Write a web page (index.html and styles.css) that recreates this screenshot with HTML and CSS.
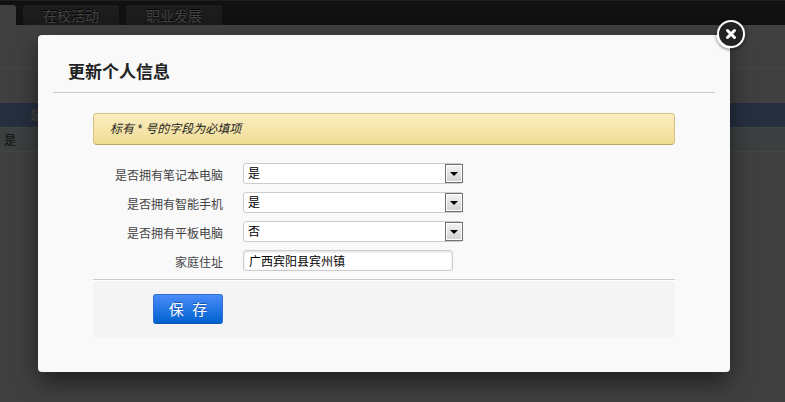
FILE: index.html
```
<!DOCTYPE html>
<html lang="zh-CN">
<head>
    <meta charset="utf-8">
    <title>更新个人信息</title>
    <link rel="stylesheet" href="styles.css">
</head>
<body>
    <div class="page">
        <nav class="tabs">
            <a href="#" class="tab current" aria-label="个人信息"></a>
            <a href="#activity" class="tab">在校活动</a>
            <a href="#career" class="tab">职业发展</a>
        </nav>
        <div class="toolbar"></div>
        <table class="list">
            <thead>
                <tr><th>是</th></tr>
            </thead>
            <tbody>
                <tr><td>是</td></tr>
            </tbody>
        </table>
    </div>

    <div class="modal" role="dialog" aria-labelledby="modal_title">
        <button type="button" class="close" aria-label="关闭">
            <svg width="30" height="30" viewBox="0 0 30 30">
                <circle cx="15" cy="15" r="13" fill="#222" stroke="#fff" stroke-width="2"/>
                <path d="M11.5 11.5l7 7M18.5 11.5l-7 7" stroke="#fff" stroke-width="3" stroke-linecap="round"/>
            </svg>
        </button>
        <h2 class="title" id="modal_title">更新个人信息</h2>
        <form class="form" action="#" method="post">
            <p class="notice">标有 * 号的字段为必填项</p>
            <div class="row">
                <label for="has_laptop">是否拥有笔记本电脑</label>
                <div class="select-wrapper">
                    <select id="has_laptop" name="has_laptop">
                        <option selected>是</option>
                        <option>否</option>
                    </select>
                    <span class="arrow"><svg width="8" height="4" viewBox="0 0 8 4"><path d="M0 0h8L4 4z"/></svg></span>
                </div>
            </div>
            <div class="row">
                <label for="has_phone">是否拥有智能手机</label>
                <div class="select-wrapper">
                    <select id="has_phone" name="has_phone">
                        <option selected>是</option>
                        <option>否</option>
                    </select>
                    <span class="arrow"><svg width="8" height="4" viewBox="0 0 8 4"><path d="M0 0h8L4 4z"/></svg></span>
                </div>
            </div>
            <div class="row">
                <label for="has_tablet">是否拥有平板电脑</label>
                <div class="select-wrapper">
                    <select id="has_tablet" name="has_tablet">
                        <option>是</option>
                        <option selected>否</option>
                    </select>
                    <span class="arrow"><svg width="8" height="4" viewBox="0 0 8 4"><path d="M0 0h8L4 4z"/></svg></span>
                </div>
            </div>
            <div class="row">
                <label for="address">家庭住址</label>
                <input type="text" id="address" name="address" value="广西宾阳县宾州镇">
            </div>
            <div class="actions">
                <button type="submit" class="save">保&nbsp;&nbsp;存</button>
            </div>
        </form>
    </div>
</body>
</html>
```
FILE: styles.css
```
* {
    box-sizing: border-box;
}

body {
    margin: 0;
    min-height: 100vh;
    background-color: #404040;
    color: #444;
    font-family: "Liberation Sans", "Noto Sans CJK SC", sans-serif;
    font-size: 12px;
}

/* dimmed page behind the dialog */
.tabs {
    display: flex;
    align-items: flex-end;
    gap: 7px;
    height: 25px;
    border-top: 1px solid #1f1f1f;
    background-color: #111;
}

.tab {
    width: 96px;
    height: 20px;
    border-radius: 3px 3px 0 0;
    background: linear-gradient(#1e1e1e, #1a1a1a);
    color: #444;
    font-size: 14px;
    line-height: 22px;
    text-align: center;
    text-decoration: none;
    text-shadow: 0 -1px 0 #000;
}

.tab.current {
    width: 16px;
    border-radius: 0 3px 0 0;
    background: #404040;
}

.toolbar {
    height: 44px;
    margin-bottom: 34px;
    border-bottom: 1px solid #484848;
}

.list {
    width: 100%;
    border-collapse: collapse;
    color: #111;
}

.list th {
    height: 24px;
    padding: 0 30px;
    background-color: #262f40;
    color: #444;
    text-align: left;
}

.list td {
    height: 24px;
    padding: 0 4px;
    border-top: 1px solid #444;
    border-bottom: 1px solid #464646;
    background-color: #3c4040;
}

/* dialog */
.modal {
    position: absolute;
    top: 35px;
    left: 38px;
    right: 55px;
    padding: 26px 15px 34px;
    border-radius: 4px;
    background-color: #f9f9f9;
    box-shadow: 0 10px 25px rgba(0, 0, 0, 0.5);
}

.close {
    position: absolute;
    top: -16px;
    right: -16px;
    width: 30px;
    height: 30px;
    padding: 0;
    border: none;
    border-radius: 50%;
    background: none;
    box-shadow: 0 1px 3px rgba(0, 0, 0, 0.5);
    cursor: pointer;
}

.close svg {
    display: block;
}

.title {
    margin: 0;
    padding: 0 15px 8px;
    border-bottom: 1px solid #ccc;
    color: #222;
    font-size: 17px;
    line-height: 23px;
}

.form {
    margin: 20px 40px 0;
}

.notice {
    margin: 0 0 18px;
    padding: 1px 16px 0;
    border: 1px solid #d5c37f;
    border-bottom-color: #b9a767;
    border-radius: 4px;
    background: linear-gradient(#fceec1, #eedc94);
    color: #222;
    font-style: italic;
    line-height: 29px;
}

.row {
    display: flex;
    gap: 20px;
    margin-bottom: 8px;
}

.row label {
    width: 130px;
    padding-top: 5px;
    line-height: 16px;
    text-align: right;
}

.select-wrapper {
    position: relative;
    width: 220px;
}

select,
input[type="text"] {
    display: block;
    height: 21px;
    margin: 0;
    padding: 0 5px;
    border: 1px solid #ccc;
    border-radius: 3px;
    background-color: #fff;
    color: #000;
    font-family: inherit;
    font-size: 12px;
}

select {
    width: 100%;
    padding: 0 4px;
    appearance: none;
}

input[type="text"] {
    width: 210px;
    box-shadow: inset 0 1px 3px #ddd;
}

.arrow {
    position: absolute;
    top: 1px;
    right: 0;
    display: flex;
    align-items: center;
    justify-content: center;
    width: 18px;
    height: 19px;
    border: 1px solid #707070;
    background: linear-gradient(#f4f4f4, #d0d0d0);
    box-shadow: inset 0 0 0 1px #fff;
    pointer-events: none;
}

.actions {
    padding: 14px 60px;
    border-top: 1px solid #ccc;
    border-radius: 0 0 5px 5px;
    background-color: #f4f4f4;
    box-shadow: inset 0 1px 0 #fff;
}

.save {
    display: block;
    width: 70px;
    height: 30px;
    padding: 0 0 2px;
    border: 1px solid #2f70d5;
    border-bottom-color: #0b57b5;
    border-radius: 3px;
    background: linear-gradient(#4a8cfa, #0061cf);
    color: #fff;
    font-family: inherit;
    font-size: 15px;
    text-shadow: 0 -1px 0 #1a55b0;
    cursor: pointer;
}
```
